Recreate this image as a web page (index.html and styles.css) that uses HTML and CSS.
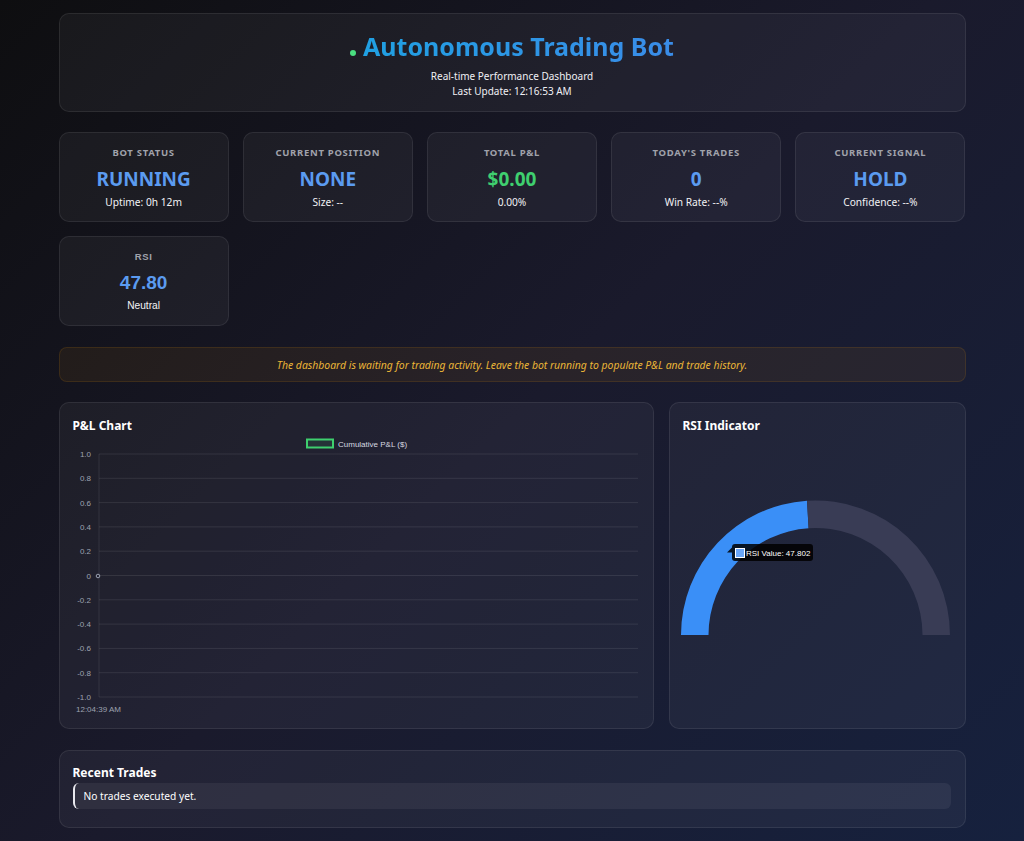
FILE: index.html
```html
<!DOCTYPE html>
<html lang="en">
<head>
<meta charset="utf-8">
<title>Autonomous Trading Bot</title>
<link rel="stylesheet" href="styles.css">
</head>
<body>
<div class="container">
  <header class="header card">
    <h1 class="title"><span class="dot"></span><span class="title-text">Autonomous Trading Bot</span></h1>
    <p class="subtitle">Real-time Performance Dashboard</p>
    <p class="subtitle">Last Update: 12:16:53 AM</p>
  </header>

  <section class="stats">
    <div class="stat card">
      <div class="stat-label">Bot Status</div>
      <div class="stat-value blue">RUNNING</div>
      <div class="stat-sub">Uptime: 0h 12m</div>
    </div>
    <div class="stat card">
      <div class="stat-label">Current Position</div>
      <div class="stat-value blue">NONE</div>
      <div class="stat-sub">Size: --</div>
    </div>
    <div class="stat card">
      <div class="stat-label">Total P&amp;L</div>
      <div class="stat-value green">$0.00</div>
      <div class="stat-sub">0.00%</div>
    </div>
    <div class="stat card">
      <div class="stat-label">Today's Trades</div>
      <div class="stat-value blue">0</div>
      <div class="stat-sub">Win Rate: --%</div>
    </div>
    <div class="stat card">
      <div class="stat-label">Current Signal</div>
      <div class="stat-value blue">HOLD</div>
      <div class="stat-sub">Confidence: --%</div>
    </div>
    <div class="stat card">
      <div class="stat-label arial">RSI</div>
      <div class="stat-value blue arial">47.80</div>
      <div class="stat-sub arial">Neutral</div>
    </div>
  </section>

  <div class="notice">The dashboard is waiting for trading activity. Leave the bot running to populate P&amp;L and trade history.</div>

  <section class="charts">
    <div class="chart card">
      <h3 class="section-title">P&amp;L Chart</h3>
      <svg class="pnl-svg" width="567" height="280" viewBox="0 0 567 280">
        <rect x="234" y="1.5" width="26" height="8" fill="rgba(74,222,128,0.1)" stroke="#3ecf6e" stroke-width="2"/>
        <text x="265" y="9" class="legend">Cumulative P&amp;L  ($)</text>
        <g class="grid">
          <line x1="26" y1="16" x2="565" y2="16"/>
          <line x1="26" y1="40.3" x2="565" y2="40.3"/>
          <line x1="26" y1="64.6" x2="565" y2="64.6"/>
          <line x1="26" y1="88.9" x2="565" y2="88.9"/>
          <line x1="26" y1="113.2" x2="565" y2="113.2"/>
          <line x1="26" y1="137.5" x2="565" y2="137.5"/>
          <line x1="26" y1="161.8" x2="565" y2="161.8"/>
          <line x1="26" y1="186.1" x2="565" y2="186.1"/>
          <line x1="26" y1="210.4" x2="565" y2="210.4"/>
          <line x1="26" y1="234.7" x2="565" y2="234.7"/>
          <line x1="26" y1="259" x2="565" y2="259"/>
          <line x1="26" y1="16" x2="26" y2="259"/>
        </g>
        <g class="ticks">
          <text x="18" y="19">1.0</text>
          <text x="18" y="43.3">0.8</text>
          <text x="18" y="67.6">0.6</text>
          <text x="18" y="91.9">0.4</text>
          <text x="18" y="116.2">0.2</text>
          <text x="18" y="140.5">0</text>
          <text x="18" y="164.8">-0.2</text>
          <text x="18" y="189.1">-0.4</text>
          <text x="18" y="213.4">-0.6</text>
          <text x="18" y="237.7">-0.8</text>
          <text x="18" y="262">-1.0</text>
        </g>
        <circle cx="25" cy="138" r="1.8" fill="none" stroke="#9aa0b0" stroke-width="1"/>
        <text x="3" y="274" class="xtick">12:04:39 AM</text>
      </svg>
    </div>
    <div class="chart card">
      <h3 class="section-title">RSI Indicator</h3>
      <svg class="rsi-svg" width="269" height="200" viewBox="0 0 269 200">
        <path d="M 0 194 A 134.5 134.5 0 0 1 126 59.8 L 127.6 87.3 A 107 107 0 0 0 27.5 194 Z" fill="#3a8ff7"/>
        <path d="M 126 59.8 A 134.5 134.5 0 0 1 269 194 L 241.5 194 A 107 107 0 0 0 127.6 87.3 Z" fill="#393c55"/>
        <path d="M 51 111.5 L 46 111.5 L 51 106.5 Z" fill="rgba(0,0,0,0.85)"/>
        <rect x="51" y="103" width="81" height="17" rx="3" fill="rgba(0,0,0,0.85)"/>
        <rect x="54.5" y="107.5" width="9" height="9" fill="#6aa6f8" stroke="#ffffff" stroke-width="1"/>
        <text x="65" y="115" class="tip">RSI Value: 47.802</text>
      </svg>
    </div>
  </section>

  <section class="trades card">
    <h3 class="section-title">Recent Trades</h3>
    <div class="trade-item">No trades executed yet.</div>
  </section>
</div>
</body>
</html>
```

FILE: styles.css
```css
* { box-sizing: border-box; }

html, body {
  margin: 0;
  padding: 0;
  min-height: 100%;
}

body {
  font-family: "Noto Sans", "Open Sans", sans-serif;
  color: #ffffff;
  background: linear-gradient(135deg, #0e0e10 0%, #1a1a2c 50%, #16213e 100%);
  min-height: 841px;
}

.container {
  width: 907px;
  margin: 0 auto;
  padding-top: 13px;
}

.card {
  background: rgba(255, 255, 255, 0.045);
  border: 1px solid rgba(255, 255, 255, 0.08);
  border-radius: 10px;
}

.header {
  text-align: center;
  padding: 16px 20px 11px;
  height: 99px;
}

.title {
  margin: 0 0 7px;
  font-size: 25px;
  line-height: 32px;
  font-weight: 700;
  display: flex;
  justify-content: center;
  align-items: baseline;
}

.dot {
  width: 6px;
  height: 6px;
  border-radius: 50%;
  background: #4ade80;
  margin-right: 7px;
  display: inline-block;
}

.title-text {
  background: linear-gradient(90deg, #20a0e2, #3a8ce8);
  -webkit-background-clip: text;
  background-clip: text;
  color: transparent;
}

.subtitle {
  margin: 0;
  font-size: 10px;
  line-height: 15px;
  color: #f0f0f4;
}

.stats {
  margin-top: 20px;
  display: grid;
  grid-template-columns: repeat(5, 1fr);
  gap: 14px;
}

.stat {
  height: 90px;
  padding: 14px 10px 0;
  text-align: center;
}

.stat-label {
  font-size: 9.5px;
  line-height: 12px;
  font-weight: 700;
  letter-spacing: 0.7px;
  text-transform: uppercase;
  color: #a0a2ab;
}

.stat-value {
  margin-top: 8px;
  font-size: 19px;
  line-height: 24px;
  font-weight: 700;
}

.stat-value.blue { color: #5b9bf0; }
.stat-value.green { color: #3fcf6f; }

.stat-sub {
  margin-top: 4px;
  font-size: 10.2px;
  line-height: 14px;
  color: #f2f2f5;
}

.arial { font-family: "Liberation Sans", Arial, sans-serif; }

.notice {
  margin-top: 21px;
  height: 35px;
  display: flex;
  align-items: center;
  justify-content: center;
  background: rgba(245, 158, 11, 0.07);
  border: 1px solid rgba(245, 158, 11, 0.12);
  border-radius: 8px;
  color: #ebb637;
  font-style: italic;
  font-size: 10.4px;
}

.charts {
  margin-top: 20px;
  display: grid;
  grid-template-columns: 2fr 1fr;
  gap: 15px;
}

.chart {
  height: 327px;
  padding: 14px 13px 0;
}

.section-title {
  margin: 0;
  font-size: 12px;
  line-height: 18px;
  font-weight: 700;
  color: #ffffff;
}

.pnl-svg {
  display: block;
  margin-top: 3px;
  margin-left: 0;
}

.rsi-svg {
  display: block;
  margin-top: 6px;
  margin-left: -2px;
}

.legend, .ticks text, .xtick, .tip {
  font-family: "Liberation Sans", Arial, sans-serif;
  font-size: 8px;
}

.legend { fill: #d6d8e0; }
.ticks text { fill: #9ea2b0; text-anchor: end; }
.xtick { fill: #9ea2b0; }
.tip { fill: #ffffff; }

.grid line {
  stroke: rgba(255, 255, 255, 0.09);
  stroke-width: 1;
}

.trades {
  margin-top: 21px;
  height: 78px;
  padding: 13px 14px 0 13px;
}

.trade-item {
  margin-top: 1px;
  height: 26px;
  display: flex;
  align-items: center;
  padding-left: 9px;
  font-size: 10.2px;
  background: rgba(255, 255, 255, 0.06);
  border-left: 2px solid #e8e8ee;
  border-radius: 6px;
}
```
